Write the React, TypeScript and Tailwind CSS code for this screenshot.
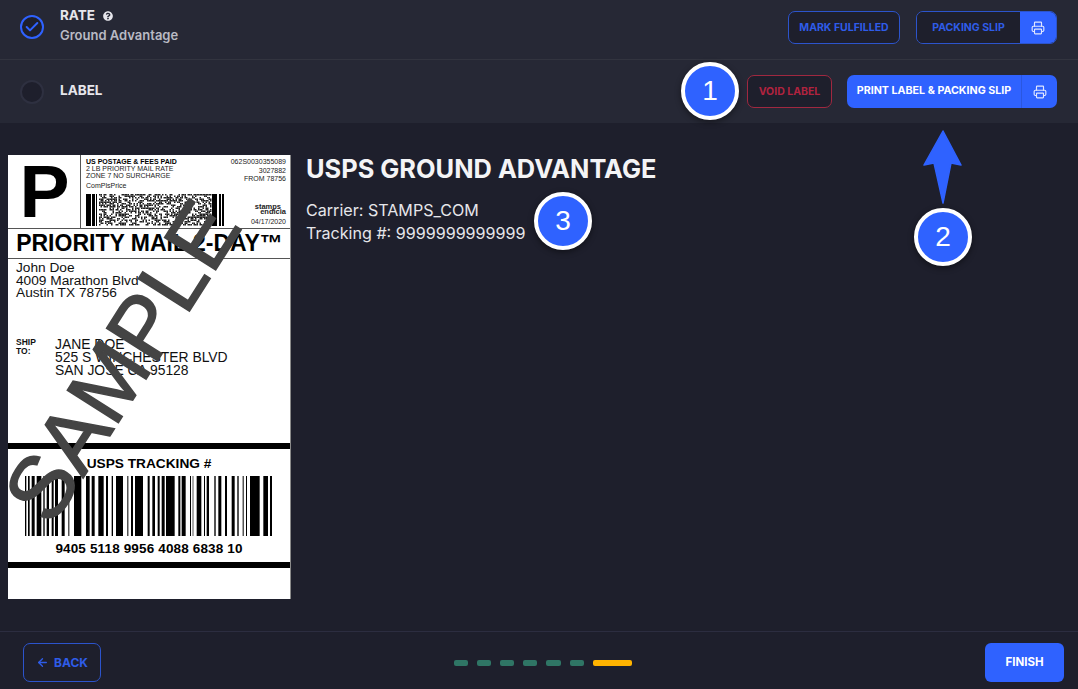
import { ArrowLeft, Check, Printer } from 'lucide-react';
import { FaQuestionCircle } from 'react-icons/fa';

const trackingBars = [
  [75, 4], [84, 5], [95, 9], [110, 14], [130, 4], [140, 7], [155, 6], [165, 9], [185, 9], [205, 3],
  [222, 22], [258, 11], [275, 9], [295, 16], [318, 6], [335, 4], [348, 21], [382, 3], [393, 6], [405, 24],
  [443, 6], [457, 8], [473, 6], [485, 9], [498, 26], [535, 6], [545, 12], [570, 3], [578, 2], [590, 14],
  [612, 3], [620, 7], [643, 4], [655, 9], [675, 6], [695, 9], [712, 4], [728, 3], [738, 3], [750, 29],
  [790, 14], [810, 6],
];

function matrixCells() {
  const cells: { x: number; y: number }[] = [];
  let seed = 17;
  for (let y = 0; y < 21; y++) {
    for (let x = 0; x < 75; x++) {
      seed = (seed * 75 + 74) % 65537;
      if (seed % 100 < 52) cells.push({ x, y });
    }
  }
  return cells;
}

function MatrixBarcode() {
  return (
    <svg width="139" height="32" viewBox="0 0 139 32" className="block">
      <rect x="0" y="0" width="5" height="32" fill="#000" />
      <rect x="6" y="0" width="3" height="32" fill="#000" />
      <rect x="10" y="0" width="1" height="32" fill="#000" />
      {matrixCells().map((c) => (
        <rect key={`${c.x}-${c.y}`} x={13 + c.x * 1.5} y={c.y * 1.5} width="1.5" height="1.5" fill="#222" />
      ))}
      <rect x="126" y="0" width="5" height="32" fill="#000" />
      <rect x="133" y="0" width="2" height="32" fill="#000" />
      <rect x="136" y="0" width="2" height="32" fill="#000" />
    </svg>
  );
}

function TrackingBarcode() {
  return (
    <svg width="248" height="60" viewBox="75 0 744 60" preserveAspectRatio="none" className="block">
      {trackingBars.map(([x, w]) => (
        <rect key={x} x={x} y="0" width={w} height="60" fill="#000" />
      ))}
    </svg>
  );
}

function ShippingLabel() {
  return (
    <div className="relative flex h-[444px] w-[283px] flex-col overflow-hidden border-r border-[#8a8a8a] bg-white font-['Liberation_Sans',Arial,sans-serif] text-black">
      <div className="flex h-[74px] border-b border-[#555]">
        <div className="flex w-[73px] items-center justify-center border-r border-[#555] pl-[1px] text-[75px] font-bold leading-none">
          P
        </div>
        <div className="flex flex-1 flex-col pl-[5px] pr-[4px] pt-[3px]">
          <div className="flex h-[36px] justify-between">
            <div className="text-[7px] leading-[7px] text-[#222]">
              <p className="font-bold text-black">US POSTAGE &amp; FEES PAID</p>
              <p>2 LB PRIORITY MAIL RATE</p>
              <p>ZONE 7 NO SURCHARGE</p>
              <p className="mt-[2.5px]">ComPlsPrice</p>
            </div>
            <div className="text-right text-[7px] leading-[8.5px] text-[#222]">
              <p>062S0030355089</p>
              <p>3027882</p>
              <p>FROM 78756</p>
            </div>
          </div>
          <div className="flex justify-between">
            <MatrixBarcode />
            <div className="flex flex-col items-end justify-end pb-[1px] text-[7px] leading-[7px] text-[#222]">
              <p className="pr-[5px] text-[7.5px] font-bold leading-[5px]">stamps</p>
              <p className="mb-[3.5px] text-[7.5px] font-bold leading-[6px]">endicia</p>
              <p className="w-max">04/17/2020</p>
            </div>
          </div>
        </div>
      </div>
      <div className="flex h-[30px] items-center justify-center border-b border-[#555] pl-[1px] text-[23px] font-bold leading-none">
        PRIORITY MAIL 2-DAY™
      </div>
      <div className="h-[184px] pl-[8px] pt-[3px] text-[13.7px] leading-[12.5px] text-[#111]">
        <p>John Doe</p>
        <p>4009 Marathon Blvd</p>
        <p>Austin TX 78756</p>
        <div className="mt-[38px] flex">
          <p className="w-[39px] text-[8.5px] font-bold leading-[9px]">
            SHIP
            <br />
            TO:
          </p>
          <div className="text-[13.9px] leading-[13.4px]">
            <p>JANE DOE</p>
            <p>525 S WINCHESTER BLVD</p>
            <p>SAN JOSE CA 95128</p>
          </div>
        </div>
      </div>
      <div className="h-[6px] bg-black" />
      <div className="flex h-[113px] flex-col items-center">
        <p className="mt-[6px] text-[13.7px] font-bold leading-[17px]">USPS TRACKING #</p>
        <div className="mt-[4px]">
          <TrackingBarcode />
        </div>
        <p className="mt-[5px] text-[13.5px] font-bold leading-[15px] tracking-[0.15px]">
          9405 5118 9956 4088 6838 10
        </p>
      </div>
      <div className="h-[6px] bg-black" />
      <div
        aria-hidden
        className="absolute left-[-106px] top-[152px] w-[440px] -rotate-[57.5deg] text-center text-[88px] leading-[108px] text-[#444] [-webkit-text-stroke:1.5px_#444]"
      >
        SAMPLE
      </div>
    </div>
  );
}

function Badge({ n, className }: { n: number; className: string }) {
  return (
    <div
      className={`absolute flex h-[58px] w-[58px] items-center justify-center rounded-full border-[4px] border-white bg-[#2f62ff] font-['Liberation_Sans',Arial,sans-serif] text-[28px] text-white shadow-[0_2px_6px_rgba(0,0,0,0.45)] ${className}`}
    >
      {n}
    </div>
  );
}

export default function App() {
  return (
    <div className="relative flex h-[689px] w-[1078px] flex-col overflow-hidden bg-[#1e1f2c] font-['Inter',sans-serif] text-white">
      <header className="bg-[#262835]">
        <div className="flex h-[60px] items-start justify-between border-b border-[#32343f] pl-[20px] pr-[21px]">
          <div className="flex items-start gap-[16px]">
            <div className="mt-[15px] flex h-[24px] w-[24px] items-center justify-center rounded-full border-2 border-[#2f62ff] bg-[#1e1f2c]">
              <Check size={16} strokeWidth={3} className="text-[#2f62ff]" />
            </div>
            <div className="mt-[8px] flex flex-col gap-[5px]">
              <div className="flex items-center gap-[8px] text-[13.5px] font-bold leading-[15px] text-[#e6e6ec]">
                RATE
                <FaQuestionCircle size={10} className="text-[#e6e6ec]" />
              </div>
              <div className="text-[13px] font-semibold leading-[15px] text-[#b9bac4]">Ground Advantage</div>
            </div>
          </div>
          <div className="flex items-center gap-[16px] pt-[11px]">
            <button className="h-[33px] w-[112px] rounded-[7px] border border-[#2c54cc] bg-[#1e1f2c] text-[10.5px] font-bold text-[#2f5ce8]">
              MARK FULFILLED
            </button>
            <div className="flex h-[33px] w-[141px] overflow-hidden rounded-[7px] border border-[#2c54cc]">
              <button className="flex-1 bg-[#1e1f2c] text-[10.5px] font-bold text-[#2f5ce8]">PACKING SLIP</button>
              <div className="flex w-[36px] items-center justify-center bg-[#2f62ff]">
                <Printer size={14} className="text-[#dfe6ff]" />
              </div>
            </div>
          </div>
        </div>
        <div className="flex h-[63px] items-center justify-between pl-[20px] pr-[21px]">
          <div className="flex items-center gap-[16px]">
            <div className="h-[24px] w-[24px] rounded-full border-2 border-[#2e3040] bg-[#1e1f2c]" />
            <div className="mb-[2px] text-[13.5px] font-bold text-[#e6e6ec]">LABEL</div>
          </div>
          <div className="flex items-center gap-[15px]">
            <button className="h-[33px] w-[85px] rounded-[7px] border border-[#a02840] bg-[#1e1f2c] text-[10.5px] font-bold text-[#b0233f]">
              VOID LABEL
            </button>
            <div className="flex h-[33px] w-[210px] overflow-hidden rounded-[7px] bg-[#2f62ff]">
              <button className="flex-1 border-r border-[#2a57e0] text-[10.7px] font-bold text-white">
                PRINT LABEL &amp; PACKING SLIP
              </button>
              <div className="flex w-[35px] items-center justify-center">
                <Printer size={14} className="text-[#dfe6ff]" />
              </div>
            </div>
          </div>
        </div>
      </header>

      <main className="flex flex-1 items-start gap-[15px] pl-[8px] pt-[32px]">
        <ShippingLabel />
        <div className="pt-[1px]">
          <h1 className="text-[25.4px] font-bold leading-[26px] text-[#f4f4f6]">USPS GROUND ADVANTAGE</h1>
          <div className="mt-[17px] text-[16.1px] leading-[23px] text-[#e6e6ea]">
            <p>Carrier: STAMPS_COM</p>
            <p>Tracking #: 9999999999999</p>
          </div>
        </div>
      </main>

      <footer className="flex h-[58px] items-start justify-between border-t border-[#2c2d40] pl-[23px] pr-[14px] pt-[11px]">
        <button className="flex h-[39px] w-[78px] items-center justify-center gap-[5px] rounded-[7px] border border-[#2c54cc] text-[12px] font-bold text-[#2f5ce8]">
          <ArrowLeft size={13} strokeWidth={2.5} />
          BACK
        </button>
        <div className="flex h-[39px] items-center gap-[9px]">
          <span className="h-[6px] w-[14px] rounded-[2px] bg-[#2f7565]" />
          <span className="h-[6px] w-[14px] rounded-[2px] bg-[#2f7565]" />
          <span className="h-[6px] w-[14px] rounded-[2px] bg-[#2f7565]" />
          <span className="h-[6px] w-[14px] rounded-[2px] bg-[#2f7565]" />
          <span className="h-[6px] w-[15px] rounded-[2px] bg-[#2f7565]" />
          <span className="h-[6px] w-[14px] rounded-[2px] bg-[#2f7565]" />
          <span className="h-[6px] w-[39px] rounded-[2px] bg-[#ffb300]" />
        </div>
        <button className="h-[39px] w-[79px] rounded-[6px] bg-[#2f62ff] text-[11.5px] font-bold text-white">FINISH</button>
      </footer>

      <Badge n={1} className="left-[681px] top-[62px]" />
      <Badge n={2} className="left-[914px] top-[208px]" />
      <Badge n={3} className="left-[534px] top-[192px]" />
      <svg className="absolute left-[920px] top-[128px]" width="46" height="78" viewBox="920 128 46 78">
        <path
          d="M943 131 L961 165 L951 163 L943 203 L934 163 L924 165 Z"
          fill="#2f62ff"
          stroke="#2f62ff"
          strokeWidth="1.5"
          strokeLinejoin="round"
        />
      </svg>
    </div>
  );
}
